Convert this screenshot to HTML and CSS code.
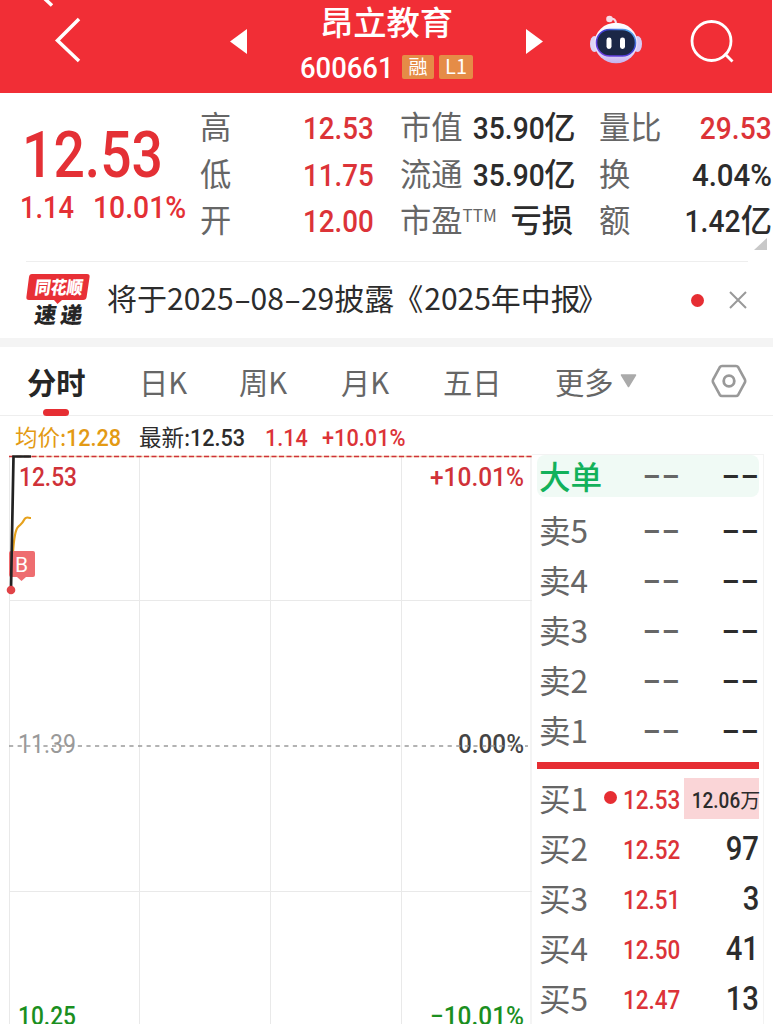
FILE: index.html
```html
<!DOCTYPE html>
<html lang="zh-CN">
<head>
<meta charset="utf-8">
<title>昂立教育 600661</title>
<link rel="stylesheet" href="styles.css">
</head>
<body>
<div class="page">
  <header class="header">
    <svg class="icon" width="200" height="93" viewBox="0 0 200 93"><path d="M44.500-1.500l7.500 7M79 19L57.500 40.500L79 61" fill="none" stroke="#fff" stroke-width="3.500"/></svg>
    <svg class="icon" width="100" height="93" viewBox="200 0 100 93"><path d="M247 29v25l-17-12.500z" fill="#fff"/></svg>
    <div class="title">
      <h1 class="name">昂立教育</h1>
      <div class="code-row"><span class="code"><span class="num">600661</span></span><span class="badge">融</span><span class="badge badge-l1">L1</span></div>
    </div>
    <svg class="icon" width="100" height="93" viewBox="474 0 100 93"><path d="M526 29v25l17-12.500z" fill="#fff"/></svg>
    <svg class="icon" width="98" height="93" viewBox="574 0 98 93">
      <defs>
        <linearGradient id="shell" x1="0" y1="0" x2="0" y2="1"><stop offset="0" stop-color="#fff"/><stop offset=".7" stop-color="#e6dcfa"/><stop offset="1" stop-color="#c3b2ef"/></linearGradient>
        <linearGradient id="rim" x1="0" y1="1" x2="1" y2="0"><stop offset="0" stop-color="#7a3fe8"/><stop offset=".6" stop-color="#3b3fd0"/><stop offset="1" stop-color="#59c8f4"/></linearGradient>
      </defs>
      <path d="M610 19c4-1 6 1 6 5" fill="none" stroke="#f3dbe9" stroke-width="2"/>
      <circle cx="609.500" cy="19" r="3.300" fill="#f6dce8"/>
      <ellipse cx="594.500" cy="44" rx="4.500" ry="8" fill="#ddd4f6"/>
      <ellipse cx="637.500" cy="44" rx="4.500" ry="8" fill="#d8cbf5"/>
      <ellipse cx="616" cy="43" rx="21.500" ry="20.300" fill="url(#shell)"/>
      <rect x="596.500" y="29.500" width="39" height="26.500" rx="13" fill="#1b2747" stroke="url(#rim)" stroke-width="1.600"/>
      <rect x="606.500" y="37.500" width="5" height="11.500" rx="2.400" fill="#fff"/>
      <rect x="620" y="37.500" width="5" height="11.500" rx="2.400" fill="#fff"/>
    </svg>
    <svg class="icon" width="100" height="93" viewBox="672 0 100 93"><g fill="none" stroke="#fff" stroke-width="2.800"><circle cx="711.500" cy="41" r="19.500"/><path d="M724.500 53.500l8 8"/></g></svg>
  </header>

  <section class="quote">
    <div class="price">
      <div class="last"><span class="num">12.53</span></div>
      <div class="change"><span class="num">1.14</span><span class="num pct">10.01%</span></div>
    </div>
    <dl class="stats stats-a">
      <div class="stat"><dt>高</dt><dd class="up"><span class="num">12.53</span></dd></div>
      <div class="stat"><dt>低</dt><dd class="up"><span class="num">11.75</span></dd></div>
      <div class="stat"><dt>开</dt><dd class="up"><span class="num">12.00</span></dd></div>
    </dl>
    <dl class="stats stats-b">
      <div class="stat"><dt>市值</dt><dd class="cap"><span class="num">35.90</span>亿</dd></div>
      <div class="stat"><dt>流通</dt><dd class="cap"><span class="num">35.90</span>亿</dd></div>
      <div class="stat"><dt>市盈<sup>TTM</sup></dt><dd>亏损</dd></div>
    </dl>
    <dl class="stats stats-c">
      <div class="stat"><dt>量比</dt><dd class="up"><span class="num">29.53</span></dd></div>
      <div class="stat"><dt>换</dt><dd><span class="num pct">4.04%</span></dd></div>
      <div class="stat"><dt>额</dt><dd><span class="num">1.42</span>亿</dd></div>
    </dl>
    <i class="corner"></i>
  </section>

  <section class="news">
    <svg class="logo" width="64" height="56" viewBox="26 272 64 56">
      <path d="M32 274h55q3 0 2.600 3l-3 20q-.4 3-3.500 3H62l-4.500 4-3.500-4H29q-3 0-2.600-3l2.600-20q.4-3 3-3z" fill="#e83036"/>
      <text class="logo-a" transform="translate(34 294) skewX(-8)" textLength="48" lengthAdjust="spacingAndGlyphs">同花顺</text>
      <text class="logo-b" transform="translate(33.500 323) skewX(-8)" textLength="48" lengthAdjust="spacing">速递</text>
    </svg>
    <p class="headline">将于2025<span class="dash">-</span>08<span class="dash">-</span>29披露<span class="open">《</span>2025年中报<span class="close">》</span></p>
    <i class="unread"></i>
    <svg width="20" height="20" viewBox="0 0 20 20"><path d="M2 2l16 16M18 2L2 18" stroke="#999" stroke-width="2"/></svg>
  </section>

  <nav class="tabs">
    <a class="tab active">分时</a>
    <a class="tab">日K</a>
    <a class="tab">周K</a>
    <a class="tab">月K</a>
    <a class="tab">五日</a>
    <a class="tab">更多<svg class="caret" width="17" height="14" viewBox="0 0 17 14"><path d="M1.500 1h14L8.500 12.500z" fill="#aaa" stroke="#aaa" stroke-width="1.500" stroke-linejoin="round"/></svg></a>
    <svg class="gear" width="36" height="34" viewBox="0 0 36 34" fill="none" stroke="#999"><path d="M11 2h14q1.500 0 2.300 1.300l6.500 12q.8 1.700 0 3.400l-6.500 12Q26.500 32 25 32H11q-1.500 0-2.300-1.300l-6.500-12q-.8-1.700 0-3.400l6.500-12Q9.500 2 11 2z" stroke-width="2.600"/><circle cx="18" cy="17" r="5.300" stroke-width="2.800"/></svg>
  </nav>

  <div class="legend">
    <span class="lg avg">均价:<span class="num">12.28</span></span>
    <span class="lg now">最新:<span class="num">12.53</span></span>
    <span class="lg diff up"><span class="num">1.14</span></span>
    <span class="lg up"><span class="num pct">+10.01%</span></span>
  </div>

  <main class="board">
    <svg class="chart" width="532" height="570" viewBox="0 454 532 570">
      <path d="M9.500 457V1024M139.500 457V1024M270.500 457V1024M401.500 457V1024M531 457V1024M9 600.500H532M9 891.500H532" stroke="#e9e9e9" fill="none"/>
      <path d="M9 456.500H532" stroke="#f3d9b8" stroke-width="1.500"/>
      <path d="M9 456.500H532" stroke="#cf3338" stroke-width="1.500" stroke-dasharray="5 2.500"/>
      <path d="M13 552C14 538 15 530 18 527S22 524 24 520S28 518 31 518" fill="none" stroke="#e6a11c" stroke-width="2.200"/>
      <path d="M11 551H33q2 0 2 2v22q0 2-2 2H26l-4.500 4-4.500-4H11q-2 0-2-2V553q0-2 2-2z" fill="#ee6d70"/>
      <path d="M11 590L13.500 456.500H31" fill="none" stroke="#222" stroke-width="2.700"/>
      <text class="mark" x="15" y="571.500">B</text>
      <circle cx="11" cy="590" r="4.300" fill="#e04347"/>
      <g class="axis">
        <text x="19" y="486" fill="#d03238" textLength="58" lengthAdjust="spacingAndGlyphs">12.53</text>
        <text x="430" y="486" fill="#d03238" textLength="94" lengthAdjust="spacingAndGlyphs">+10.01%</text>
        <text class="thin" x="18" y="753" fill="#999" textLength="58" lengthAdjust="spacingAndGlyphs">11.39</text>
        <text x="458" y="753" fill="#444" textLength="66" lengthAdjust="spacingAndGlyphs">0.00%</text>
        <text x="18" y="1025" fill="#1b8f1f" textLength="58" lengthAdjust="spacingAndGlyphs">10.25</text>
        <text x="430" y="1025" fill="#1b8f1f" textLength="94" lengthAdjust="spacingAndGlyphs">−10.01%</text>
      </g>
      <path d="M9 746H528" stroke="#9a9a9a" stroke-width="1.500" stroke-dasharray="4.200 4.400"/>
    </svg>

    <aside class="book">
      <div class="row big"><span class="lv">大单</span><span class="px none">--</span><span class="vol none">--</span></div>
      <div class="row"><span class="lv">卖5</span><span class="px none">--</span><span class="vol none">--</span></div>
      <div class="row"><span class="lv">卖4</span><span class="px none">--</span><span class="vol none">--</span></div>
      <div class="row"><span class="lv">卖3</span><span class="px none">--</span><span class="vol none">--</span></div>
      <div class="row"><span class="lv">卖2</span><span class="px none">--</span><span class="vol none">--</span></div>
      <div class="row"><span class="lv">卖1</span><span class="px none">--</span><span class="vol none">--</span></div>
      <div class="split"></div>
      <div class="row"><span class="lv">买1</span><i class="dot"></i><span class="px"><span class="num">12.53</span></span><span class="vol flash"><span class="num">12.06</span>万</span></div>
      <div class="row"><span class="lv">买2</span><span class="px"><span class="num">12.52</span></span><span class="vol"><span class="num">97</span></span></div>
      <div class="row"><span class="lv">买3</span><span class="px"><span class="num">12.51</span></span><span class="vol"><span class="num">3</span></span></div>
      <div class="row"><span class="lv">买4</span><span class="px"><span class="num">12.50</span></span><span class="vol"><span class="num">41</span></span></div>
      <div class="row"><span class="lv">买5</span><span class="px"><span class="num">12.47</span></span><span class="vol"><span class="num">13</span></span></div>
    </aside>
  </main>
</div>
</body>
</html>
```
FILE: styles.css
```css
* { box-sizing: border-box; }
body, h1, p, dl, dd { margin: 0; }
body {
  background: #fff;
  color: #2c2c2c;
  font-family: "Noto Sans CJK SC", sans-serif;
  overflow: hidden;
}
svg { display: block; flex: none; }
.page { width: 773px; height: 1024px; overflow: hidden; }

/* Condensed figures */
.num {
  display: inline-block;
  font-family: Roboto, sans-serif;
  font-weight: 500;
  white-space: nowrap;
  transform: scaleX(.865);
  transform-origin: 100% 50%;
}
.up { color: #dc3338; }

.header {
  display: grid;
  grid-template-columns: 200px 100px 174px 100px 98px 100px;
  width: 772px;
  height: 93px;
  background: #f12e36;
  color: #fff;
}
.name { font-size: 33.300px; line-height: 42px; font-weight: 500; text-align: center; white-space: nowrap; }
.title { padding-right: 1px; }
.code-row { display: flex; align-items: center; margin-top: 9px; height: 32px; }
.code { width: 102px; font-size: 29.500px; line-height: 32px; margin-top: -1px; }
.code .num { transform: scaleX(.93); transform-origin: 0 50%; }
.badge {
  flex: none;
  width: 32px;
  height: 24px;
  border-radius: 2px;
  background: #e58c47;
  font-size: 19px;
  line-height: 22px;
  text-align: center;
}
.badge-l1 { width: 34px; margin-left: 5px; font-size: 20px; }

.quote {
  position: relative;
  display: grid;
  grid-template-columns: 200px 200px 199px 174px;
  height: 168px;
}
.price { color: #e43035; }
.price .num { transform-origin: 0 50%; }
.last { margin: 17px 0 0 22px; font-size: 65px; line-height: 78px; }
.last .num { transform: scaleX(.85); }
.change { display: flex; margin: -2px 0 0 20px; font-size: 31.500px; line-height: 32px; }
.change .num { width: 73px; }
.change .pct { transform: scaleX(.9); }
.stats { padding-top: 10px; font-size: 31.300px; line-height: 46.600px; }
.stats-a { padding-right: 26px; }
.stats-b { padding-right: 26px; }
.stats-c { padding-right: 1px; }
.stat { display: flex; justify-content: space-between; height: 46.600px; white-space: nowrap; }
.stat dt { color: #666; }
.stat dd { font-weight: 500; }
.stat .cap { margin-right: 1.500px; }
.stat .num { font-size: 32px; }
.stats-b .num, .stats-c .num { transform: scaleX(.88); }
.stats-c .pct { transform: scaleX(.92); }
.stat sup { font-size: 17px; line-height: 0; vertical-align: 10px; }
.corner {
  position: absolute;
  right: 6px;
  bottom: 11px;
  border-left: 13px solid transparent;
  border-bottom: 12px solid #c8c8c8;
}

.news {
  display: flex;
  align-items: center;
  width: 722px;
  height: 77px;
  margin-left: 26px;
  border-top: 1px solid #eee;
}
.logo-a { font-size: 18px; font-weight: 900; fill: #fff; }
.logo-b { font-size: 22px; font-weight: 900; fill: #252525; }
.headline { width: 575px; margin: -6px 0 0 17px; font-size: 30px; line-height: 40px; white-space: nowrap; }
.dash { display: inline-block; width: 17px; text-align: center; transform: scaleX(1.7); }
.open { margin: 0 1px 0 -1px; }
.close { margin-left: -3px; }
.unread { width: 13px; height: 13px; margin-left: 9px; border-radius: 50%; background: #e62e33; }
.unread + svg { margin-left: 24px; }

.tabs {
  display: grid;
  grid-template-columns: 112px 100px 102px 102px 112px 156px 36px;
  align-items: center;
  height: 78px;
  padding-left: 27px;
  border-top: 9px solid #f4f4f4;
  border-bottom: 1px solid #eee;
}
.tab { position: relative; display: flex; align-items: center; height: 68px; padding-bottom: 1px; font-size: 29.300px; color: #666; }
.active { color: #262626; font-weight: 700; }
.active::after {
  content: "";
  position: absolute;
  left: 16px;
  bottom: -1px;
  width: 26px;
  height: 7px;
  border-radius: 4px;
  background: #e62e33;
}
.caret { margin: 1px 0 0 6px; }

.legend { display: flex; height: 38px; padding-left: 15px; font-size: 22.500px; line-height: 40px; white-space: nowrap; }
.legend .num { font-size: 24px; transform: scaleX(.9); transform-origin: 0 50%; }
.legend .pct { transform: scaleX(.905); }
.lg { flex: none; width: 124px; }
.diff { width: 57px; }
.now { width: 126px; }
.avg { color: #e39a14; }

.board { display: flex; height: 570px; }
.axis, .mark { font-family: Roboto, sans-serif; }
.axis { font-size: 26px; font-weight: 500; }
.axis .thin { font-weight: 400; }
.mark { font-size: 21px; fill: #fff; }

.book {
  width: 232px;
  padding: 0 4px 0 5px;
  border: solid #f3f3f3;
  border-width: 1px 1px 0 0;
}
.row { display: flex; align-items: center; height: 50px; padding-left: 2px; position: relative; }
.lv { width: 64px; padding-bottom: 3px; font-size: 31.600px; line-height: 46px; color: #666; white-space: nowrap; }
.px { width: 77px; padding-bottom: 2px; text-align: right; font-size: 26px; color: #dc3338; }
.vol { width: 75px; margin-left: 4px; padding-bottom: 6px; text-align: right; font-size: 32.500px; font-weight: 500; white-space: nowrap; }
.vol .num { transform: scaleX(.9); }
.big { height: 42px; margin-bottom: 8px; border-radius: 8px; background: #f0faf5; }
.big .lv { color: #13b15b; font-weight: 500; }
.none {
  padding-bottom: 3px;
  font-family: "Liberation Sans", sans-serif;
  font-size: 36px;
  font-weight: 400;
  letter-spacing: 0;
  transform: translateX(.5px) scaleX(1.6);
  transform-origin: 100% 50%;
}
.big .none { padding-bottom: 5px; }
.px.none { color: #666; }
.split { height: 7px; margin: 7px 0 4px; background: #e62e33; }
.flash { height: 41px; padding-bottom: 0; background: #fad5d7; font-size: 20px; line-height: 44px; font-weight: 400; }
.flash .num { font-size: 22px; transform: scaleX(.86); }
.dot { position: absolute; left: 67px; top: 18px; width: 13px; height: 13px; border-radius: 50%; background: #e62e33; }
```
